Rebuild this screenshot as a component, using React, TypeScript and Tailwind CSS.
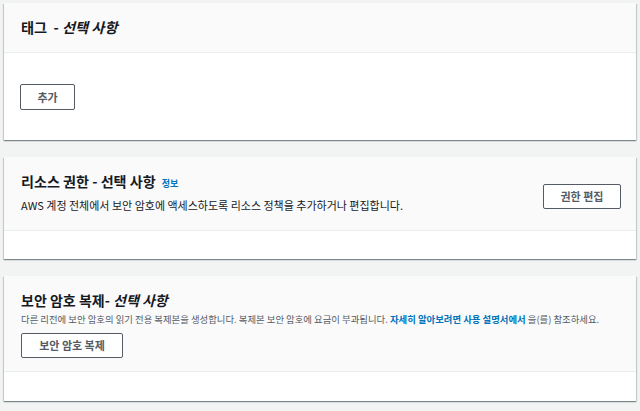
import React from 'react';

const FONT = '[font-family:"Noto_Sans_CJK_KR","Noto_Sans",sans-serif]';

const cardShadow =
  'shadow-[0_1px_1px_0_rgba(0,28,36,0.3),1px_1px_1px_0_rgba(0,28,36,0.15),-1px_1px_1px_0_rgba(0,28,36,0.15)]';

// Outlined AWS-style button
const Button: React.FC<{ label: string; className?: string }> = ({ label, className = '' }) => (
  <button
    type="button"
    className={`h-[25px] rounded-[2px] border border-[#545b64] bg-white text-[11px] font-bold text-[#545b64] ${className}`}
  >
    {label}
  </button>
);

export default function App() {
  return (
    <div className={`${FONT} flex h-[411px] w-[640px] flex-col gap-[17px] bg-[#f2f3f3] px-[4px] pt-[3px] text-[#16191f]`}>
      {/* Tags */}
      <section className={`bg-white ${cardShadow}`}>
        <div className="flex h-[50px] items-center border-b border-[#eaeded] bg-[#fafafa] pl-[17px]">
          <h2 className="text-[14.2px] font-bold">
            태그 &nbsp;- <i>선택 사항</i>
          </h2>
        </div>
        <div className="h-[87px] pl-[16px] pt-[30px]">
          <Button label="추가" className="w-[55px] h-[26px]" />
        </div>
      </section>

      {/* Resource permissions */}
      <section className={`bg-white ${cardShadow}`}>
        <div className="flex h-[74px] justify-between border-b border-[#eaeded] bg-[#fafafa] pl-[17px] pr-[15px]">
          <div className="pt-[14px]">
            <h2 className="flex items-baseline text-[14.1px] font-bold leading-[20px]">
              리소스 권한 - 선택 사항
              <span className="ml-[6px] text-[9px] font-bold text-[#0073bb]">정보</span>
            </h2>
            <p className="mt-[1px] text-[11px] leading-[20px]">
              AWS 계정 전체에서 보안 암호에 액세스하도록 리소스 정책을 추가하거나 편집합니다.
            </p>
          </div>
          <div className="pt-[25px]">
            <Button label="권한 편집" className="w-[78px]" />
          </div>
        </div>
        <div className="h-[28px]" />
      </section>

      {/* Replicate secret */}
      <section className={`bg-white ${cardShadow}`}>
        <div className="h-[96px] border-b border-[#eaeded] bg-[#fafafa] pl-[17px] pt-[13px]">
          <h2 className="text-[14px] font-bold leading-[22px]">
            보안 암호 복제- <i>선택 사항</i>
          </h2>
          <p className="text-[9.4px] leading-[16px] text-[#545b64]">
            다른 리전에 보안 암호의 읽기 전용 복제본을 생성합니다. 복제본 보안 암호에 요금이 부과됩니다.{' '}
            <span className="font-bold text-[#0073bb]">자세히 알아보려면 사용 설명서에서</span> 을(를) 참조하세요.
          </p>
          <Button label="보안 암호 복제" className="mt-[6px] w-[102px]" />
        </div>
        <div className="h-[29px]" />
      </section>
    </div>
  );
}
